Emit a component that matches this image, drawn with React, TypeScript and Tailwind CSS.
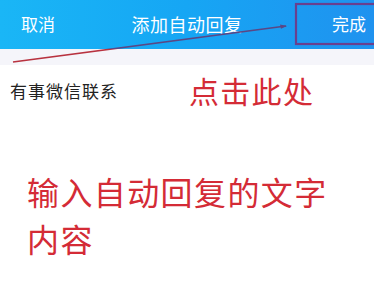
const cjk = { fontFamily: '"Noto Sans CJK SC", "Noto Sans", sans-serif' };

const Annotation = () => (
  <svg
    className="pointer-events-none absolute left-0 top-0"
    width={374}
    height={300}
    viewBox="0 0 374 300"
  >
    <defs>
      <clipPath id="onHeader">
        <rect x={0} y={0} width={374} height={49} />
      </clipPath>
      <clipPath id="onPage">
        <rect x={0} y={49} width={374} height={251} />
      </clipPath>
    </defs>
    <g clipPath="url(#onHeader)">
      <line x1={13} y1={62} x2={286} y2={26} stroke="#5b4785" strokeWidth={1.6} />
      <path d="M287 26 L280 24.5 L281 28.8 Z" fill="#5b4785" />
    </g>
    <g clipPath="url(#onPage)">
      <line x1={13} y1={62} x2={286} y2={26} stroke="#b8323f" strokeWidth={1.6} />
    </g>
    <rect x={296} y={4} width={90} height={40} fill="none" stroke="#6a3f8e" strokeWidth={2.2} />
  </svg>
);

const App = () => {
  return (
    <div className="relative h-[300px] w-[374px] overflow-hidden bg-white" style={cjk}>
      <div className="flex h-[49px] items-center bg-gradient-to-r from-[#1ab6f6] via-[#16a6f4] to-[#1f92ef] pb-[2px] text-white">
        <span className="w-[120px] pl-[21px] text-[17px] leading-none">取消</span>
        <span className="flex-1 text-center text-[18px] leading-none tracking-[0.5px]">添加自动回复</span>
        <span className="w-[120px] pr-[8px] text-right text-[17px] leading-none">完成</span>
      </div>
      <div className="h-[16px] bg-[#f5f5fa]" />

      <div className="mt-[10px] flex items-center">
        <span className="w-[180px] pl-[10px] text-[17px] leading-none tracking-[1px] text-[#222222]">
          有事微信联系
        </span>
        <span className="pl-[9px] text-[30px] leading-[30px] tracking-[1.3px] text-[#d42b36]">点击此处</span>
      </div>

      <div className="mt-[63px] pl-[27px] text-[32px] leading-[47px] tracking-[1.4px] text-[#d42b36]">
        <div>输入自动回复的文字</div>
        <div>内容</div>
      </div>

      <Annotation />
    </div>
  );
};

export default App;
